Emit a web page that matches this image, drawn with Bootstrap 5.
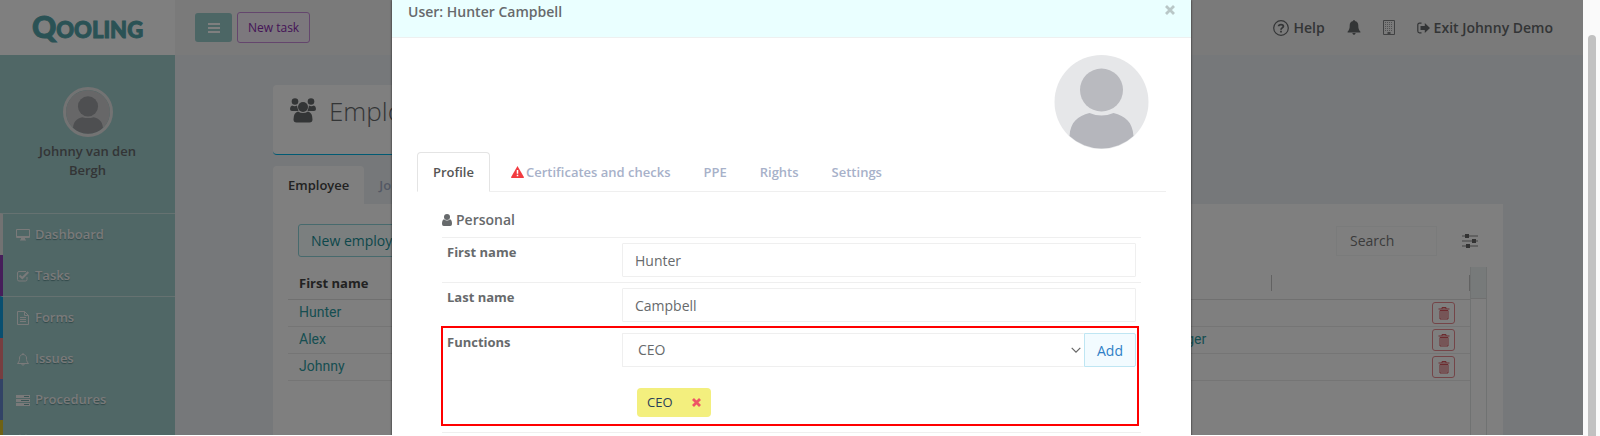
<!DOCTYPE html>
<html lang="en">
<head>
<meta charset="utf-8">
<meta name="viewport" content="width=device-width, initial-scale=1">
<title>Qooling - Employees</title>
<link href="https://cdn.jsdelivr.net/npm/bootstrap@5.3.0/dist/css/bootstrap.min.css" rel="stylesheet">
<style>
  :root { --ink: #676a6c; --line: #efefef; --teal: #2f9da3; }
  body { font-family: "Open Sans", "Noto Sans", sans-serif; font-size: 14px; line-height: 19px; color: var(--ink); background: #fff; }
  a { text-decoration: none; color: inherit; }
  svg { display: block; flex: none; }
  .screen { height: calc(100vh - 1px); }
  .semi { font-weight: 600; }

  /* sidebar */
  .side { width: 175px; background: #a0cecd; font-size: 13px; }
  .brand { height: 55px; background: #fff; color: #55a5ab; font-family: Lato, sans-serif; font-weight: 900; font-size: 22px; line-height: 52px; -webkit-text-stroke: 1px #55a5ab; }
  .brand .cap { font-size: 30px; }
  .person { height: 158px; padding-top: 32px; }
  .person .semi { padding: 5px 34px 0; }
  .face { border: 3px solid #e6e6e6; border-radius: 50%; }
  .side-list li { height: 41px; border-left: 3px solid; }
  .side-list a { padding-left: 13px; gap: 5px; color: #f4f4f4; text-shadow: 0 1px 1px #5f8f90; }
  .side-list .ruled { height: 42px; border-top: 1px solid #cde4e3; }
  .side-list .k-grey { border-left-color: #e4e4e4; }
  .side-list .k-purple { border-left-color: #8c3cb4; }
  .side-list .k-blue { border-left-color: #109fe0; }
  .side-list .k-red { border-left-color: #ee7c80; }
  .side-list .k-navy { border-left-color: #6486cc; }
  .side-list .k-yellow { border-left-color: #dfc428; }

  /* top bar */
  .main { background: #edf0f4; min-width: 0; }
  .top { height: 55px; background: #f4f4f4; padding: 0 30px 0 20px; }
  .top nav { gap: 22px; }
  .btn { font-size: 14px; line-height: 19px; border-radius: 3px; }
  .btn-menu { width: 37px; height: 29px; background: #98cccb; color: #fff; }
  .btn-task { height: 31px; margin-left: 5px; padding: 5px 10px; font-size: 12px; border-color: #c98ddb; background: #f8f0fb; color: #8a2aae; }

  /* page */
  .page { padding: 30px 80px 0 98px; }
  .title-card { width: 50%; height: 70px; background: #fff; border-radius: 4px; border-bottom: 1px solid #00b4e6; padding: 13px 17px; gap: 13px; }
  .title-card h1 { font-size: 26px; line-height: 26px; font-weight: 300; }
  .page-tabs { margin-top: 11px; font-size: 13px; }
  .page-tabs a { height: 38px; padding: 0 15px; border-radius: 4px 4px 0 0; color: #a7b1c9; }
  .page-tabs a.on { background: #fff; color: #444; }
  .sheet { background: #fff; height: 400px; padding: 20px 16px 0 15px; }
  .btn-new { height: 33px; margin-left: 10px; padding: 6px 12px; border-color: #8fd5da; background: #f6ffff; color: #1a8f96; }
  .find { width: 101px; height: 30px; padding: 4px 13px; border: 1px solid #f4f6f6; border-radius: 0; font-size: 14px; color: var(--ink); background: #fff; }
  .find::placeholder { color: #777; opacity: 1; }
  .grid-area { margin-top: 10px; }
  .people { table-layout: fixed; width: 100%; font-family: Roboto, sans-serif; font-size: 14px; color: var(--teal); }
  .people th { font-family: "Open Sans", sans-serif; font-size: 13px; color: #444; height: 32px; padding: 2px 11px 0; }
  .people td { height: 27px; padding: 0 11px; border-bottom: 1px solid #ebebeb; }
  .people thead tr { border-bottom: 1px solid #e0e0e0; }
  .people .tick { background: linear-gradient(#c4c4c4, #c4c4c4) right center / 1px 16px no-repeat; }
  .gutter { width: 17px; border: solid #e0e4e4; border-width: 0 1px; }
  .gutter div { height: 32px; background: #eff4f4; border-bottom: 1px solid #e0e0e0; }
  .btn-bin { width: 23px; height: 22px; border: 1px solid #e88b90; color: #d9565e; }

  /* dialog */
  .user-dialog { max-width: 799px; }
  .user-dialog .modal-content { border: 0; border-radius: 0; min-height: 100vh; background: #fff; box-shadow: 0 0 2px rgba(0,0,0,.8); color: var(--ink); }
  .user-dialog .modal-header { height: 38px; padding: 2px 16px 14px; border-bottom: 1px solid #eef0f0; border-radius: 0; background: #eaffff; }
  .user-dialog h2 { font-size: 14px; line-height: 20px; }
  .shut { color: #b9c7c7; margin-top: -2px; }
  .user-dialog .modal-body { padding: 17px 25px 0; }
  .portrait { padding-right: 17px; }
  .user-tabs { margin-top: 3px; gap: 1px; border-bottom: 1px solid var(--line); font-size: 13px; }
  .user-tabs .nav-link { height: 40px; padding: 0 15px; color: #a7b1c9; gap: 2px; border-radius: 4px 4px 0 0; }
  .user-tabs .nav-link.active { color: #555; background: #fff; border-color: #e4e4e4 #e4e4e4 #fff; }
  .personal { padding: 18px 25px 0; }
  .personal h3 { font-size: 14px; line-height: 20px; margin-bottom: 7px; }
  .field { border-top: 1px solid var(--line); padding: 5px 5px; }
  .field label { width: 175px; font-size: 13px; }
  .field .form-control, .field .form-select { height: 34px; border: 1px solid var(--line); border-radius: 1px; padding: 6px 12px; font-size: 14px; line-height: 20px; color: var(--ink); background-color: #fff; }
  .field .form-select { padding-left: 15px; border-right: 0; background-position: right 3px center; background-size: 10px 10px; background-repeat: no-repeat;
    background-image: url("data:image/svg+xml,%3Csvg xmlns='http://www.w3.org/2000/svg' viewBox='0 0 10 10'%3E%3Cpath fill='none' stroke='%23666' stroke-width='1.2' d='M.7 2.8 5 7.2l4.3-4.4'/%3E%3C/svg%3E"); }
  .marked { border: 2px solid #f00; margin: -1px 2px 6px -1px; padding: 5px 1px 7px 4px; }
  .btn-add { width: 52px; height: 34px; padding: 0; border: 1px solid #bfe6f3; border-radius: 0 2px 2px 0; background: #f2fbff; color: #2f7fc6; flex: none; }
  .tag { width: 74px; height: 29px; margin: 21px 0 0 15px; padding: 0 10px; border-radius: 4px; background: #f3ef7e; color: #2a4059; font-size: 13px; }
  .tag button { color: #ee5565; }

  /* scroll rail */
  .rail { width: 17px; background: #fafafa; padding: 35px 4px 0 5px; }
  .rail div { height: 100%; background: #c1c1c1; border-radius: 5px 5px 0 0; }
</style>
</head>
<body class="d-flex overflow-hidden">
<div class="screen position-relative flex-grow-1 overflow-hidden">
  <div class="d-flex h-100">
    <aside class="side flex-shrink-0">
      <a href="#" class="brand d-block text-center"><span class="cap">Q</span>OOLING</a>
      <div class="person d-flex flex-column align-items-center text-center">
        <svg class="face" width="50" height="50" viewBox="0 0 94 94" aria-hidden="true"><circle cx="47" cy="47" r="47" fill="#cfcfd0"/><circle cx="47" cy="35" r="21.500" fill="#9c9ea2"/><path d="M15 81c1-14 8-20 20-23q12 4 24 0c12 3 19 9 20 23a47 47 0 0 1-64 0z" fill="#9c9ea2"/></svg>
        <span class="semi">Johnny van den Bergh</span>
      </div>
      <ul class="side-list list-unstyled m-0 semi">
        <li class="k-grey ruled"><a href="#" class="d-flex align-items-center h-100"><svg width="14" height="14" viewBox="0 0 14 14"><path fill="none" stroke="currentColor" d="M.5 1.500h13v8H.5z"/><path fill="currentColor" d="M1 8h12v1.500H1zM5 10h4v1.500h1v1H4v-1h1z"/></svg>Dashboard</a></li>
        <li class="k-purple"><a href="#" class="d-flex align-items-center h-100"><svg width="14" height="14" viewBox="0 0 14 14"><path fill="none" stroke="currentColor" d="M11 8v2.500a1.500 1.500 0 0 1-1.500 1.500H3a1.500 1.500 0 0 1-1.500-1.500V4A1.500 1.500 0 0 1 3 2.500h7"/><path fill="none" stroke="currentColor" stroke-width="2" d="M3.500 6.500 6.300 9l6-6"/></svg>Tasks</a></li>
        <li class="k-blue ruled"><a href="#" class="d-flex align-items-center h-100"><svg width="14" height="14" viewBox="0 0 14 14"><path fill="none" stroke="currentColor" d="M1.500.5h7l4 4v9h-11zM8.500.5v4h4M4 6.500h6M4 8.500h6M4 10.500h6"/></svg>Forms</a></li>
        <li class="k-red"><a href="#" class="d-flex align-items-center h-100"><svg width="14" height="14" viewBox="0 0 14 14"><path fill="none" stroke="currentColor" d="M1.500 11.500h11C10.500 9.500 10.500 8 10.500 6 10.500 4 9 2.500 7 2.500S3.500 4 3.500 6c0 2 0 3.500-2 5.500zM7 2.500V1M5.700 12c.2 1.600 2.400 1.600 2.600 0"/></svg>Issues</a></li>
        <li class="k-navy"><a href="#" class="d-flex align-items-center h-100"><svg width="14" height="14" viewBox="0 0 14 14"><path fill="currentColor" d="M0 2h14v3H0zM0 6h14v3H0zM0 10h14v3H0z"/><path stroke="#77aaaa" d="M8 3.500h5M5 7.500h8M8 11.500h5"/></svg>Procedures</a></li>
        <li class="k-yellow"><a href="#" class="d-flex align-items-center h-100"><svg width="14" height="14" viewBox="0 0 14 14"><path fill="none" stroke="currentColor" d="M.5 2.500h13v11H.5zM.5 5.500h13M4 .5v3M10 .5v3"/></svg>Planning</a></li>
      </ul>
    </aside>

    <div class="main flex-grow-1 overflow-hidden">
      <header class="top d-flex align-items-center">
        <button class="btn btn-menu p-0 d-flex align-items-center justify-content-center" aria-label="Toggle menu"><svg width="12" height="12" viewBox="0 0 12 12"><path stroke="currentColor" stroke-width="2" d="M0 2h12M0 6h12M0 10h12"/></svg></button>
        <button class="btn btn-task">New task</button>
        <nav class="ms-auto d-flex align-items-center semi">
          <a href="#" class="d-flex align-items-center gap-1"><svg width="16" height="16" viewBox="0 0 16 16"><circle cx="8" cy="8" r="7.300" fill="none" stroke="currentColor" stroke-width="1.200"/><path fill="none" stroke="currentColor" stroke-width="1.800" d="M5.600 6.300C5.800 3.900 10.500 4.100 10.400 6.400 10.300 7.900 8 7.900 8 9.700M8 10.700v1.900"/></svg>Help</a>
          <a href="#" aria-label="Notifications"><svg width="14" height="15" viewBox="0 0 12 14"><path fill="currentColor" d="M6 0c.6 0 .8.400.8 1C9 1.400 10 3 10 5c0 3 .5 4.500 2 6v.700H0V11c1.500-1.500 2-3 2-6 0-2 1-3.600 3.200-4 0-.6.2-1 .8-1zM4.500 12.200h3c-.2 2.200-2.800 2.200-3 0z"/></svg></a>
          <a href="#" aria-label="Company"><svg width="12" height="15" viewBox="0 0 12 15" opacity=".8"><path fill="none" stroke="currentColor" d="M.5.5h11v14H.5z"/><path stroke="currentColor" stroke-width="1" stroke-dasharray="1 1" opacity=".7" d="M2 2.500h8M2 4.500h8M2 6.500h8M2 8.500h8M2 10.500h8"/><path fill="currentColor" d="M4.500 12h3v3h-3z"/></svg></a>
          <a href="#" class="d-flex align-items-center gap-1"><svg width="13" height="12" viewBox="0 0 13 12"><path fill="none" stroke="currentColor" stroke-width="1.200" d="M4.500 1.200H2.500Q.8 1.200.8 3v6q0 1.800 1.700 1.800h2"/><path fill="currentColor" d="M3.500 4h4.300V1L13 6l-5.200 5V8H3.500z"/></svg>Exit Johnny Demo</a>
        </nav>
      </header>

      <main class="page">
        <div class="title-card d-flex align-items-start">
          <svg width="26" height="25" viewBox="0 0 26 25"><g fill="currentColor"><circle cx="5" cy="3.500" r="3.300"/><circle cx="21" cy="3.500" r="3.300"/><circle cx="13" cy="9" r="5"/><path d="M2 7.500q3 1.500 5 0 .5 3 1.500 5.500H2Q0 13 0 11q0-3 2-3.500zM24 7.500q-3 1.500-5 0-.5 3-1.500 5.500H24q2 0 2-2 0-3-2-3.500zM8 13.500q5 3 10 0 4.500 1 4.500 8 0 3-3 3h-13q-3 0-3-3 0-7 4.500-8z"/></g></svg>
          <h1 class="m-0">Employees</h1>
        </div>
        <nav class="page-tabs d-flex semi">
          <a href="#" class="on d-flex align-items-center">Employee</a>
          <a href="#" class="d-flex align-items-center">Job titles</a>
        </nav>
        <section class="sheet">
          <div class="d-flex align-items-center">
            <button class="btn btn-new">New employee</button>
            <input class="find ms-auto" type="search" placeholder="Search" aria-label="Search">
            <button class="btn border-0 p-0 ms-4 me-2" aria-label="Filters"><svg width="18" height="16" viewBox="0 0 18 16"><path stroke="#888" stroke-width="1.200" d="M1 3h16M1 8h16M1 13h16"/><path fill="#666" d="M4 1h4v4H4zM11 6h4v4h-4zM5 11h4v4H5z"/></svg></button>
          </div>
          <div class="grid-area d-flex h-100">
            <div class="flex-grow-1">
              <table class="people">
                <colgroup><col><col><col style="width:132px"><col style="width:198px"></colgroup>
                <thead><tr><th scope="col">First name</th><th scope="col"></th><th scope="col" class="tick"></th><th scope="col" class="tick"></th></tr></thead>
                <tbody>
                  <tr><td><a href="#">Hunter</a></td><td></td><td></td><td><button class="btn btn-bin p-0 d-flex align-items-center justify-content-center ms-auto me-1" aria-label="Delete Hunter"><svg width="12" height="14" viewBox="0 0 12 14"><path fill="none" stroke="currentColor" d="M.5 3h11M4 3V1.500h4V3M2 4.500h8v8.500H2zM4 5v7M6 5v7M8 5v7"/></svg></button></td></tr>
                  <tr><td><a href="#">Alex</a></td><td></td><td><a href="#">Manager</a></td><td><button class="btn btn-bin p-0 d-flex align-items-center justify-content-center ms-auto me-1" aria-label="Delete Alex"><svg width="12" height="14" viewBox="0 0 12 14"><path fill="none" stroke="currentColor" d="M.5 3h11M4 3V1.500h4V3M2 4.500h8v8.500H2zM4 5v7M6 5v7M8 5v7"/></svg></button></td></tr>
                  <tr><td><a href="#">Johnny</a></td><td></td><td></td><td><button class="btn btn-bin p-0 d-flex align-items-center justify-content-center ms-auto me-1" aria-label="Delete Johnny"><svg width="12" height="14" viewBox="0 0 12 14"><path fill="none" stroke="currentColor" d="M.5 3h11M4 3V1.500h4V3M2 4.500h8v8.500H2zM4 5v7M6 5v7M8 5v7"/></svg></button></td></tr>
                </tbody>
              </table>
            </div>
            <div class="gutter flex-shrink-0"><div></div></div>
          </div>
        </section>
      </main>
    </div>
  </div>

  <div class="position-absolute top-0 start-0 w-100 h-100 bg-black opacity-50"></div>

  <div class="user-dialog position-absolute top-0 start-0 end-0 mx-auto" role="dialog" aria-labelledby="dialogTitle">
    <div class="modal-content">
      <div class="modal-header align-items-start">
        <h2 class="semi m-0" id="dialogTitle">User: Hunter Campbell</h2>
        <button class="shut btn border-0 p-0" aria-label="Close"><svg width="10" height="20" viewBox="0 0 10 20"><path stroke="currentColor" stroke-width="2.800" d="m1 6 8 8M9 6l-8 8"/></svg></button>
      </div>
      <div class="modal-body">
        <div class="portrait d-flex justify-content-end">
          <svg width="95" height="94" viewBox="0 0 94 94" role="img" aria-label="Profile picture"><circle cx="47" cy="47" r="47" fill="#e6e7e9"/><circle cx="47" cy="35" r="21.500" fill="#b9babf"/><path d="M15 81c1-14 8-20 20-23q12 5 24 0c12 3 19 9 20 23a47 47 0 0 1-64 0z" fill="#b5b6bc"/></svg>
        </div>
        <nav class="user-tabs nav nav-tabs semi">
          <a href="#" class="nav-link active d-flex align-items-center">Profile</a>
          <a href="#" class="nav-link d-flex align-items-center ms-1"><svg width="13" height="12" viewBox="0 0 13 12"><path fill="#f23b40" d="M6.500 0 13 11.200q0 .8-.8.8H.8q-.8 0-.8-.8z"/><path stroke="#fff" stroke-width="1.500" d="M6.500 4v3.800M6.500 8.800v1.500"/></svg>Certificates and checks</a>
          <a href="#" class="nav-link d-flex align-items-center">PPE</a>
          <a href="#" class="nav-link d-flex align-items-center">Rights</a>
          <a href="#" class="nav-link d-flex align-items-center">Settings</a>
        </nav>
        <form class="personal">
          <h3 class="semi d-flex align-items-center gap-1"><svg width="10" height="12" viewBox="0 0 10 12"><circle cx="5" cy="3" r="3" fill="currentColor"/><path fill="currentColor" d="M2 5.200q3 2.600 6 0 2 .4 2 4.800 0 2-1.800 2H1.800Q0 12 0 10q0-4.400 2-4.800z"/></svg>Personal</h3>
          <div class="field d-flex">
            <label class="fw-bold flex-shrink-0" for="first">First name</label>
            <input class="form-control" id="first" type="text" value="Hunter">
          </div>
          <div class="field d-flex">
            <label class="fw-bold flex-shrink-0" for="last">Last name</label>
            <input class="form-control" id="last" type="text" value="Campbell">
          </div>
          <div class="field marked d-flex">
            <label class="fw-bold flex-shrink-0" for="job">Functions</label>
            <div class="flex-grow-1">
              <div class="d-flex">
                <select class="form-select" id="job"><option>CEO</option></select>
                <button class="btn btn-add" type="button">Add</button>
              </div>
              <div class="tag d-flex align-items-center justify-content-between">CEO
                <button class="btn border-0 p-0" type="button" aria-label="Remove CEO"><svg width="9" height="9" viewBox="0 0 9 9"><path stroke="currentColor" stroke-width="2.800" d="m1 1 7 7M8 1 1 8"/></svg></button>
              </div>
            </div>
          </div>
          <div class="field"></div>
        </form>
      </div>
    </div>
  </div>
</div>
<div class="rail vh-100 flex-shrink-0"><div></div></div>
<script src="https://cdn.jsdelivr.net/npm/bootstrap@5.3.0/dist/js/bootstrap.bundle.min.js"></script>
</body>
</html>
